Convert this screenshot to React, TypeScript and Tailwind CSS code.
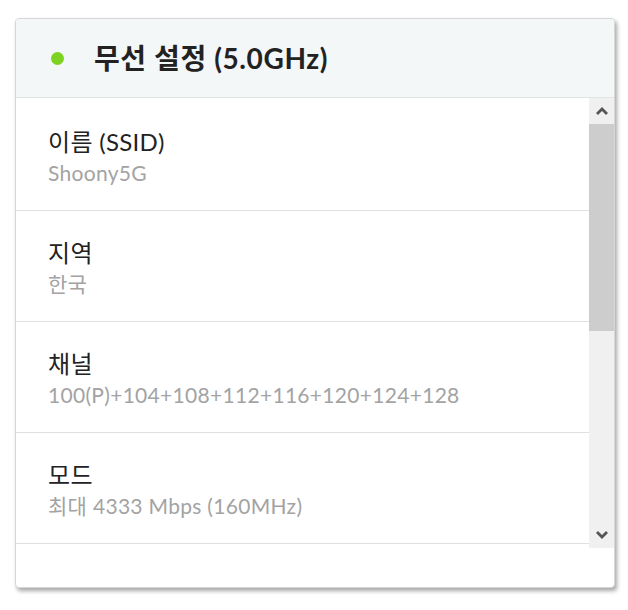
import React from "react";

const rows = [
  { label: "이름 (SSID)", value: "Shoony5G" },
  { label: "지역", value: "한국" },
  { label: "채널", value: "100(P)+104+108+112+116+120+124+128" },
  { label: "모드", value: "최대 4333 Mbps (160MHz)" },
];

function Chevron({ up }: { up?: boolean }) {
  return (
    <svg width="14" height="10" viewBox="0 0 14 10">
      <path
        d={up ? "M2 8 L7 3 L12 8" : "M2 2 L7 7 L12 2"}
        fill="none"
        stroke="#555"
        strokeWidth="2.8"
      />
    </svg>
  );
}

export default function App() {
  return (
    <div
      className="w-[628px] h-[610px] bg-white pt-[18px] pl-[15px]"
      style={{ fontFamily: '"Lato", "Noto Sans CJK KR", sans-serif' }}
    >
      <div className="w-[600px] h-[570px] rounded-[4px] border border-[#d6d6d6] bg-white shadow-[2px_3px_4px_rgba(0,0,0,0.35)] flex flex-col overflow-hidden">
        <div className="h-[79px] shrink-0 bg-[#f4f7f8] border-b border-[#e2e5e6] flex items-center pl-[35px]">
          <div className="w-[13px] h-[13px] rounded-full bg-[#7ed321]" />
          <div className="ml-[30px] text-[28px] font-bold text-[#222] leading-none tracking-[0.6px]">
            무선 설정 (5.0GHz)
          </div>
        </div>
        <div className="h-[450px] shrink-0 flex">
          <div className="flex-1 overflow-hidden pt-[2px]">
            {rows.map((r) => (
              <div
                key={r.label}
                className="h-[111px] border-b border-[#e0e0e0] pl-[32px] pt-[27px]"
              >
                <div className="text-[24px] leading-[30px] text-[#222] tracking-[0.3px]">
                  {r.label}
                </div>
                <div className="text-[21px] leading-[28px] text-[#a3a3a3] mt-[2px] tracking-[0.3px]">
                  {r.value}
                </div>
              </div>
            ))}
          </div>
          <div className="w-[25px] flex flex-col bg-[#f0f0f0]">
            <div className="h-[26px] flex items-center justify-center">
              <Chevron up />
            </div>
            <div className="h-[207px] bg-[#cdcdcd]" />
            <div className="flex-1" />
            <div className="h-[26px] flex items-center justify-center">
              <Chevron />
            </div>
          </div>
        </div>
        <div className="flex-1" />
      </div>
    </div>
  );
}
